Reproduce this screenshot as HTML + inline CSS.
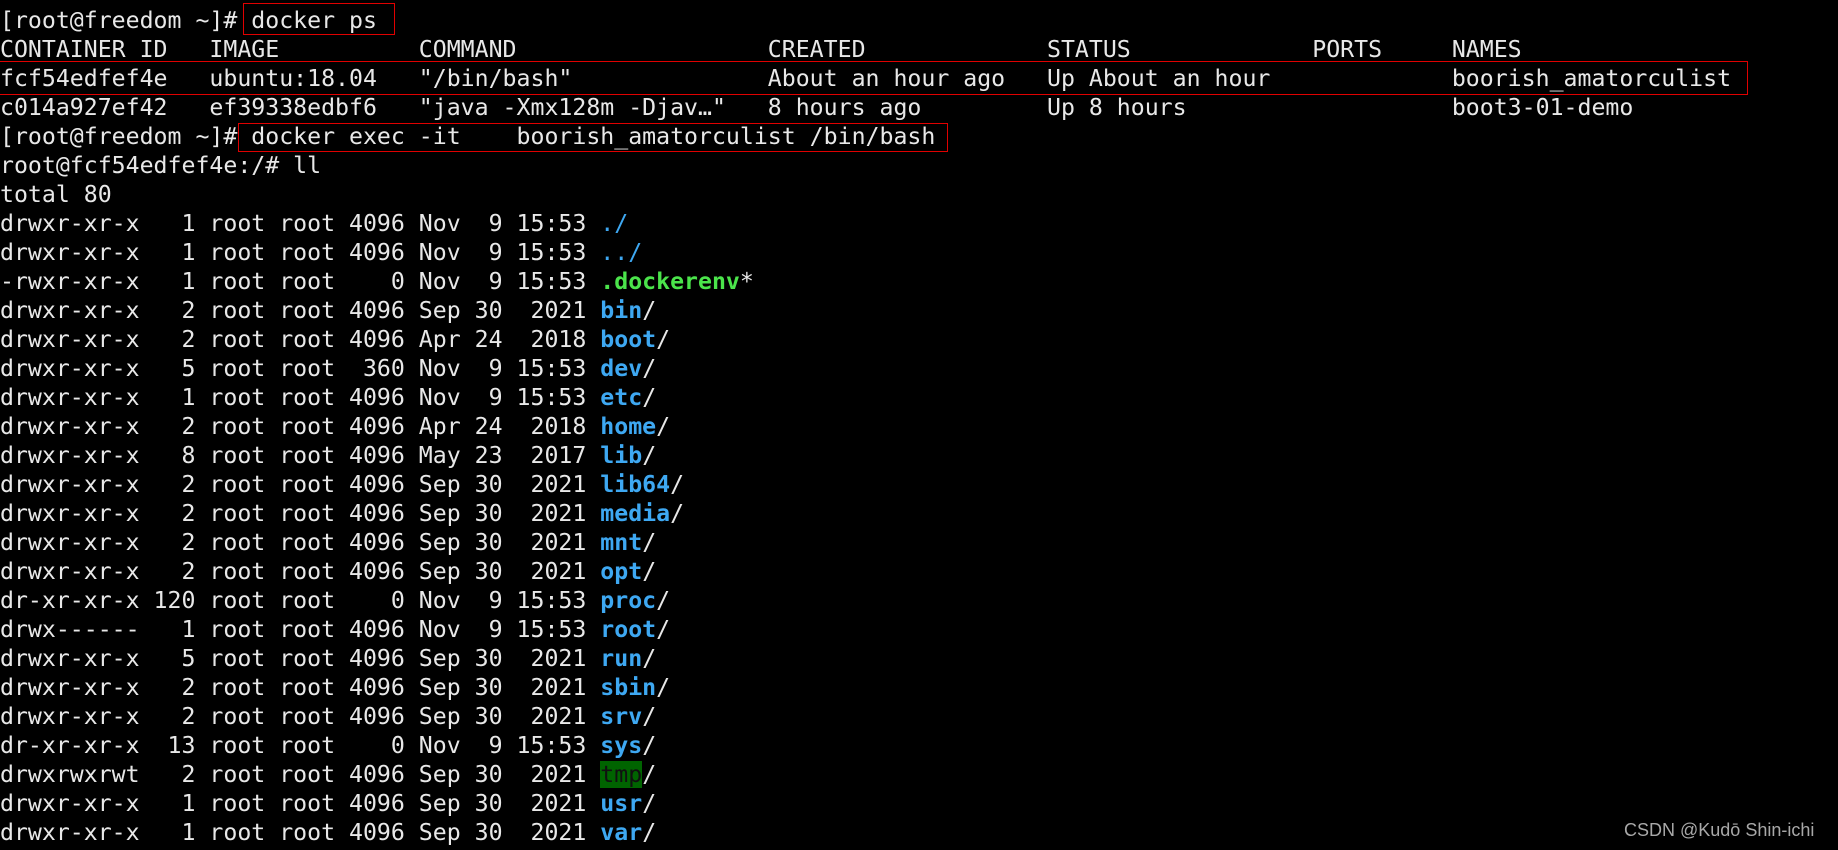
<!DOCTYPE html>
<html><head><meta charset="utf-8"><style>
html,body{margin:0;padding:0;background:#000;width:1838px;height:850px;overflow:hidden;position:relative}
pre{margin:0;position:absolute;left:0;top:6px;font-family:"DejaVu Sans Mono","Liberation Mono",monospace;font-size:23.2px;line-height:29px;color:#e8e8e8;white-space:pre}
.b{color:#3ea8f2;font-weight:bold}
.g{color:#4be44b;font-weight:bold}
.t{background:#006400;color:#111}
.box{position:absolute;border:1.5px solid #e00000;box-sizing:border-box}
.wm{position:absolute;left:1624px;top:820px;font-family:"Liberation Sans",sans-serif;font-size:18px;color:#a8a8a8}
</style></head><body>
<pre>[root@freedom ~]# docker ps
CONTAINER ID   IMAGE          COMMAND                  CREATED             STATUS             PORTS     NAMES
fcf54edfef4e   ubuntu:18.04   "/bin/bash"              About an hour ago   Up About an hour             boorish_amatorculist
c014a927ef42   ef39338edbf6   "java -Xmx128m -Djav…"   8 hours ago         Up 8 hours                   boot3-01-demo
[root@freedom ~]# docker exec -it    boorish_amatorculist /bin/bash
root@fcf54edfef4e:/# ll
total 80
drwxr-xr-x   1 root root 4096 Nov  9 15:53 <span class="b" style="font-weight:normal">./</span>
drwxr-xr-x   1 root root 4096 Nov  9 15:53 <span class="b" style="font-weight:normal">../</span>
-rwxr-xr-x   1 root root    0 Nov  9 15:53 <span class="g">.dockerenv</span>*
drwxr-xr-x   2 root root 4096 Sep 30  2021 <span class="b">bin</span>/
drwxr-xr-x   2 root root 4096 Apr 24  2018 <span class="b">boot</span>/
drwxr-xr-x   5 root root  360 Nov  9 15:53 <span class="b">dev</span>/
drwxr-xr-x   1 root root 4096 Nov  9 15:53 <span class="b">etc</span>/
drwxr-xr-x   2 root root 4096 Apr 24  2018 <span class="b">home</span>/
drwxr-xr-x   8 root root 4096 May 23  2017 <span class="b">lib</span>/
drwxr-xr-x   2 root root 4096 Sep 30  2021 <span class="b">lib64</span>/
drwxr-xr-x   2 root root 4096 Sep 30  2021 <span class="b">media</span>/
drwxr-xr-x   2 root root 4096 Sep 30  2021 <span class="b">mnt</span>/
drwxr-xr-x   2 root root 4096 Sep 30  2021 <span class="b">opt</span>/
dr-xr-xr-x 120 root root    0 Nov  9 15:53 <span class="b">proc</span>/
drwx------   1 root root 4096 Nov  9 15:53 <span class="b">root</span>/
drwxr-xr-x   5 root root 4096 Sep 30  2021 <span class="b">run</span>/
drwxr-xr-x   2 root root 4096 Sep 30  2021 <span class="b">sbin</span>/
drwxr-xr-x   2 root root 4096 Sep 30  2021 <span class="b">srv</span>/
dr-xr-xr-x  13 root root    0 Nov  9 15:53 <span class="b">sys</span>/
drwxrwxrwt   2 root root 4096 Sep 30  2021 <span class="t">tmp</span>/
drwxr-xr-x   1 root root 4096 Sep 30  2021 <span class="b">usr</span>/
drwxr-xr-x   1 root root 4096 Sep 30  2021 <span class="b">var</span>/</pre>
<div class="box" style="left:243px;top:3px;width:152px;height:32px"></div>
<div class="box" style="left:-2px;top:61px;width:1750px;height:34px"></div>
<div class="box" style="left:238px;top:123px;width:710px;height:29px"></div>
<div class="wm">CSDN @Kudō Shin-ichi</div>
</body></html>
